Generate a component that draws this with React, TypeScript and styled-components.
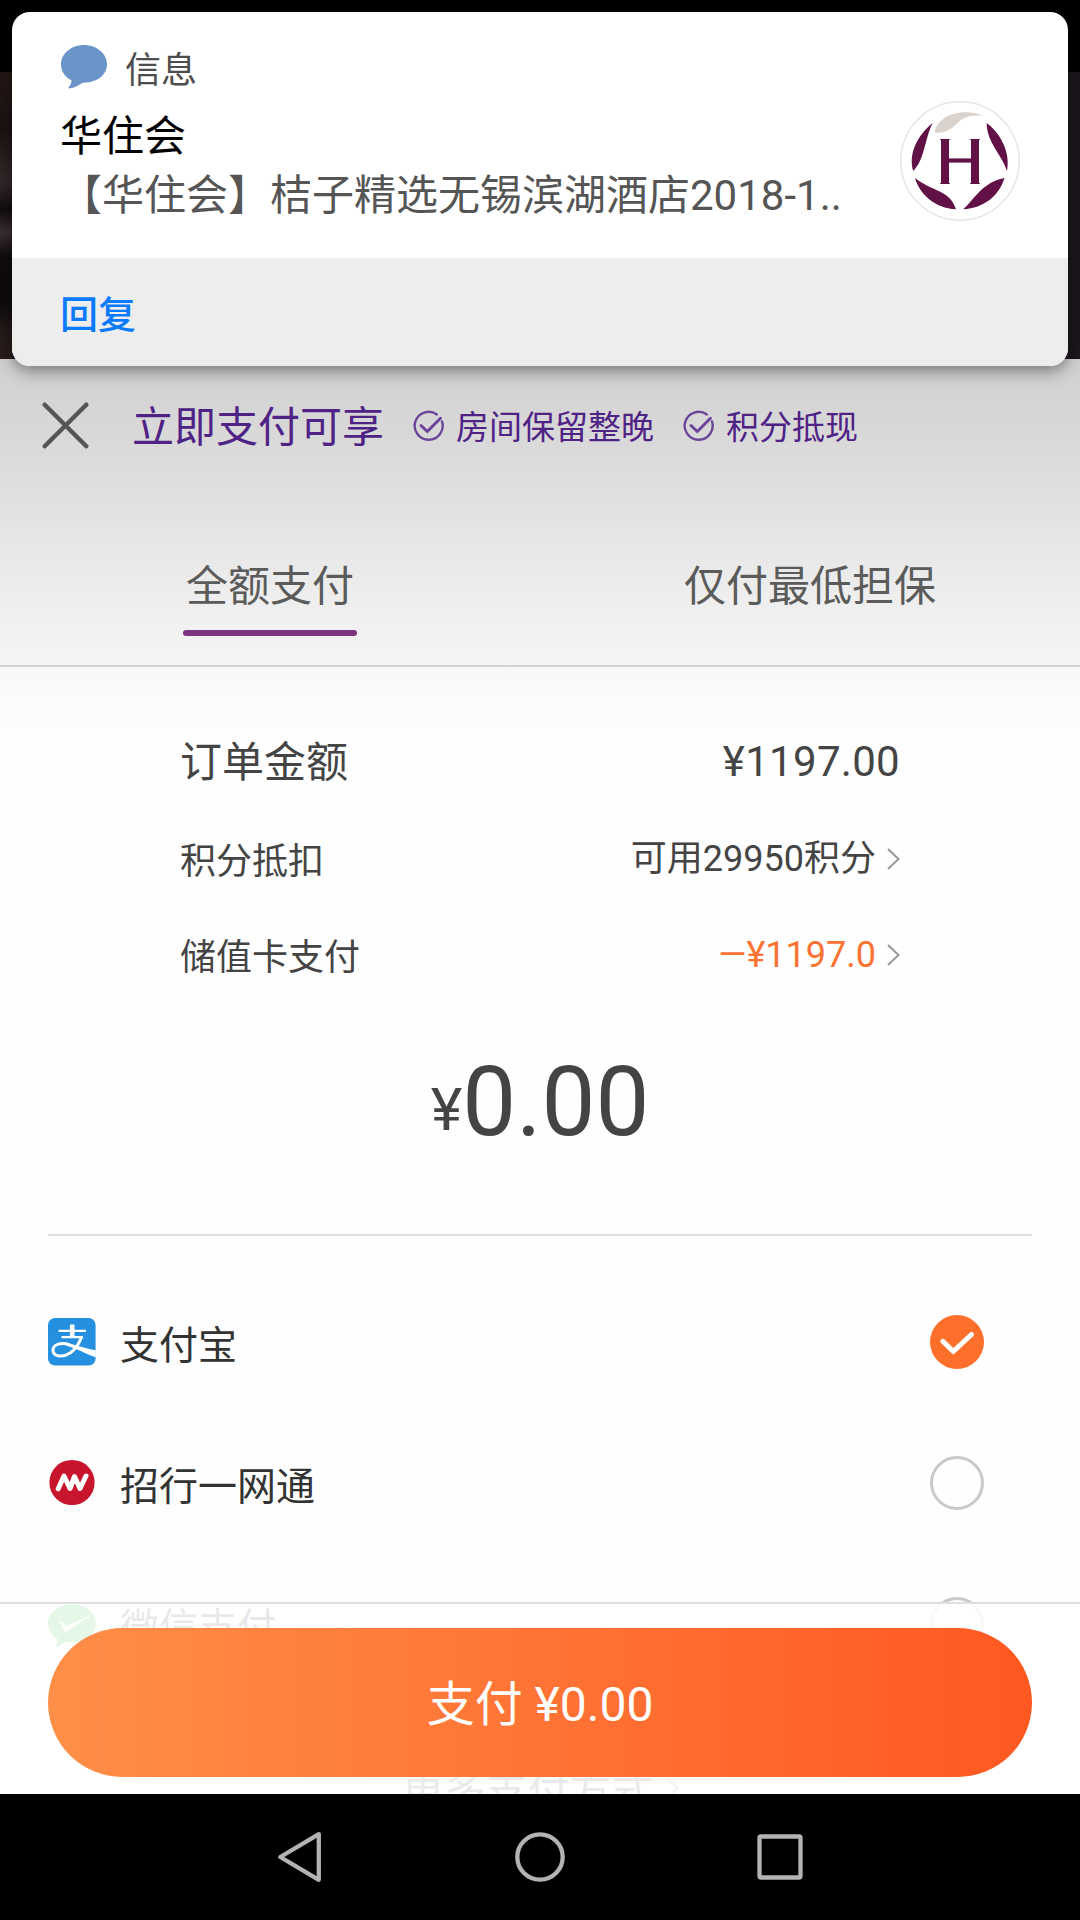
import React from 'react';
import styled, { createGlobalStyle } from 'styled-components';

const latin = `Roboto, 'Noto Sans CJK SC', sans-serif`;
const cjk = `'Noto Sans CJK SC', Roboto, sans-serif`;

const GlobalStyle = createGlobalStyle`
  * { box-sizing: border-box; }
  body { margin: 0; background: #000; font-family: ${latin}; }
`;

const Screen = styled.div`
  position: relative;
  width: 1080px;
  height: 1920px;
  overflow: hidden;
  display: flex;
  flex-direction: column;
  background: #000;
`;

const HotelPhoto = styled.div`
  flex: none;
  height: 287px;
  margin-top: 72px;
  background:
    linear-gradient(90deg, transparent 12px, #1b161c 12px),
    linear-gradient(180deg, #241816 0%, #1c1211 20%, #33282a 38%, #120d0d 48%, #3a2e31 56%, #0f0c0d 64%, #0e0a0b 80%, #241a19 90%, #2a1d1b 100%);
`;

const Sheet = styled.main`
  position: relative;
  flex: none;
  height: 1435px;
  overflow: hidden;
  background: linear-gradient(180deg, #d0d0d0 0, #d9d9d9 80px, #e4e4e4 165px, #eeeeee 240px, #f5f5f5 306px, #f8f8f8 308px, #fcfcfc 350px, #fefefe 390px, #fefefe 100%);
`;

const SheetHeader = styled.header`
  display: flex;
  align-items: center;
  height: 132px;
  padding-left: 42px;
  color: #4f2286;
  font-family: ${latin};
`;

const HeaderTitle = styled.h1`
  margin: 5px 0 0 43px;
  font-size: 42px;
  line-height: 48px;
  font-weight: 400;
`;

const Perk = styled.span<{ $gap: number }>`
  display: flex;
  align-items: center;
  gap: 12px;
  margin-left: ${(p) => p.$gap}px;
  font-size: 33px;
  line-height: 36px;
  span { padding-top: 5px; }
`;

const Tabs = styled.nav`
  display: grid;
  grid-template-columns: 1fr 1fr;
  height: 176px;
  border-bottom: 2px solid #d3d3d3;
`;

const Tab = styled.button<{ $active?: boolean }>`
  display: flex;
  flex-direction: column;
  align-items: center;
  gap: 26px;
  padding: 71px 0 0;
  border: 0;
  background: none;
  color: #5b5b5b;
  font: 400 42px/42px ${cjk};
  &::after {
    content: '';
    width: 174px;
    height: 6px;
    border-radius: 3px;
    background: ${(p) => (p.$active ? '#7c3580' : 'transparent')};
  }
`;

const Summary = styled.section`
  padding: 46px 180px 0;
  color: #444;
`;

const SummaryRow = styled.div<{ $height: number; $size: number; $tracking?: number }>`
  display: flex;
  align-items: center;
  justify-content: space-between;
  height: ${(p) => p.$height}px;
  font-size: ${(p) => p.$size}px;
  line-height: 48px;
`;

const RowLabel = styled.span<{ $drop?: number }>`
  padding-top: ${(p) => p.$drop ?? 0}px;
`;

const RowValue = styled.span<{ $accent?: boolean; $tracking?: number }>`
  display: flex;
  align-items: center;
  gap: 11px;
  letter-spacing: ${(p) => p.$tracking ?? 0}px;
  color: ${(p) => (p.$accent ? '#fb7232' : 'inherit')};
`;

const Total = styled.div`
  display: flex;
  justify-content: center;
  align-items: baseline;
  height: 231px;
  padding-top: 43px;
  font-size: 96px;
  line-height: 112px;
  color: #444;
`;

const Currency = styled.span`
  font-size: 60px;
  line-height: 60px;
  display: inline-block;
  transform: translateY(-5px);
`;

const Methods = styled.section`
  margin: 0 48px;
  padding-top: 35px;
  border-top: 2px solid #e0e0e0;
`;

const Method = styled.label`
  display: flex;
  align-items: center;
  height: 141px;
  padding-right: 48px;
  color: #333;
  font: 400 39px/44px ${cjk};
`;

const MethodIcon = styled.span`
  display: flex;
  width: 48px;
  height: 48px;
  margin-right: 24px;
`;

const MethodName = styled.span`
  flex: 1;
`;

const Radio = styled.span<{ $checked?: boolean }>`
  display: flex;
  width: 54px;
  height: 54px;
  border-radius: 50%;
  border: ${(p) => (p.$checked ? '0' : '3px solid #c9c9c9')};
  background: ${(p) => (p.$checked ? '#ff6f2c' : 'transparent')};
`;

const MoreMethods = styled.div`
  display: flex;
  align-items: center;
  justify-content: center;
  gap: 12px;
  height: 188px;
  color: #444;
  font: 400 42px/44px ${cjk};
`;

const PayBar = styled.footer`
  position: absolute;
  left: 0;
  right: 0;
  bottom: 0;
  height: 192px;
  padding: 24px 48px 0;
  border-top: 2px solid #dfdfdf;
  background: rgba(255, 255, 255, 0.89);
`;

const PayButton = styled.button`
  display: flex;
  align-items: center;
  justify-content: center;
  width: 984px;
  height: 149px;
  padding: 4px 0 0;
  border: 0;
  border-radius: 75px;
  background: linear-gradient(90deg, #ff8f48, #ff5820);
  color: #fff;
  font: 400 48px/56px ${latin};
`;

const NavBar = styled.nav`
  flex: none;
  display: flex;
  align-items: center;
  justify-content: center;
  gap: 180px;
  height: 126px;
  background: #000;
`;

const Notification = styled.aside`
  position: absolute;
  left: 12px;
  top: 12px;
  width: 1056px;
  height: 354px;
  border-radius: 18px;
  overflow: hidden;
  background: #fff;
  box-shadow: 0 5px 16px rgba(0, 0, 0, 0.42);
`;

const NoticeBody = styled.div`
  display: flex;
  justify-content: space-between;
  height: 246px;
  padding: 0 48px 0 48px;
`;

const NoticeText = styled.div`
  display: flex;
  flex-direction: column;
  padding-top: 31px;
`;

const NoticeAvatar = styled.div`
  flex: none;
  width: 120px;
  height: 120px;
  margin-top: 89px;
`;

const NoticeApp = styled.div`
  display: flex;
  align-items: center;
  gap: 18px;
  height: 48px;
  padding-left: 1px;
  color: #4d4d4d;
  font: 400 36px/48px ${cjk};
`;

const NoticeSender = styled.div`
  margin-top: 16px;
  color: #000;
  font: 400 42px/60px ${latin};
`;

const NoticeMessage = styled.div`
  width: 800px;
  color: #555;
  font: 400 42px/58px ${latin};
  white-space: nowrap;
`;

const NoticeAction = styled.button`
  display: flex;
  align-items: center;
  width: 100%;
  height: 108px;
  padding: 0 0 1px 48px;
  border: 0;
  background: #ededed;
  color: #0a7bff;
  font: 500 38px/48px ${cjk};
`;

const CloseIcon = () => (
  <svg width="47" height="47" viewBox="0 0 47 47" fill="none" stroke="#555" strokeWidth="4.4" strokeLinecap="round">
    <path d="M2.7 2.7 44.3 44.3M44.3 2.7 2.7 44.3" />
  </svg>
);

const PerkIcon = () => (
  <svg width="31" height="31" viewBox="0 0 31 31" fill="none" stroke="#6b459a" strokeWidth="2.4" strokeLinecap="round">
    <path d="M23.8 4.4A14 14 0 1 0 29 11.5" />
    <path d="M8 15.5 14.3 21.5 27.5 8.3" strokeWidth="3" />
  </svg>
);

const Chevron = () => (
  <svg width="13" height="22" viewBox="0 0 13 22" fill="none" stroke="#999" strokeWidth="2">
    <path d="M1 1 11.5 11 1 21" />
  </svg>
);

const BubbleIcon = () => (
  <svg width="46" height="44" viewBox="0 0 46 44" fill="#6b95c9">
    <path d="M23 0C10.300 0 0 8.500 0 19.500C0 26.500 4 32 10.500 35.300C10.500 38.500 9 41 7.400 42.400C7.500 43.200 8.500 43.600 9.500 43.300C14 42.800 18.500 39.500 22 37.700C35.500 38 46 30 46 19.500C46 8.500 35.700 0 23 0Z" />
  </svg>
);

const HotelLogo = () => (
  <svg width="120" height="120" viewBox="0 0 120 120" fill="#611146">
    <circle cx="60" cy="60" r="59.200" fill="#fff" stroke="#e8e3e5" strokeWidth="1.400" />
    <path fill="#dad2cc" d="M34.600 31.500C36 21 48 11.300 65 11.300C72 11.300 78 12.500 81.500 14.700C74 14 67 14.500 61 19C53 26 48 33 34.600 31.500Z" />
    <path d="M32.600 22C18 34 8 52 13.200 70C25 58 24 40 32.600 22Z" />
    <path d="M86.600 22C99 31 111 50 107 70C101 52 87 42 86.600 22Z" />
    <path d="M15 77C20 94 35 107 56 108.300C50 89 31 90 15 77Z" />
    <path d="M104.500 77C99 95 84 107 63.200 108.300C75 98 81 82 104.500 77Z" />
    <rect x="41" y="38" width="8" height="45" />
    <rect x="71" y="38" width="8" height="45" />
    <rect x="48" y="57.400" width="24" height="4.200" />
    <path d="M40.200 38h9.600v1h-9.600zM70.200 38h9.600v1h-9.600zM40.200 82h9.600v1h-9.600zM70.200 82h9.600v1h-9.600z" />
  </svg>
);

const AlipayIcon = () => (
  <svg width="48" height="48" viewBox="0 0 48 48" fill="none" stroke="#fff">
    <rect width="47.600" height="47.600" rx="7" fill="#258fe0" stroke="none" />
    <path d="M10.500 12.800H38M13.500 19.200H35" strokeWidth="2.200" />
    <path d="M24.200 6.500V19" strokeWidth="4.600" />
    <path d="M33.500 19C31 26 27.500 31 22.500 34.800C15 40 5 38.800 5 32.300C5 26 13.500 24 22 27" strokeWidth="3" />
    <path d="M18 24.700C28 26.500 36 30.500 47.800 32.200V39.300C38 36 29 30.500 18 27.500Z" fill="#fff" stroke="none" />
  </svg>
);

const CmbIcon = () => (
  <svg width="48" height="48" viewBox="0 0 48 48" fill="none">
    <circle cx="24" cy="23.500" r="22.600" fill="#c8152d" />
    <path d="M10.200 29.800 16 17 22 29.500 26.500 17.500 32 29.500 38 17" stroke="#fff" strokeWidth="5" strokeLinecap="round" strokeLinejoin="round" />
  </svg>
);

const WechatPayIcon = () => (
  <svg width="48" height="48" viewBox="0 0 48 48">
    <path fill="#19b529" d="M24 4.500C10.700 4.500 0 12.500 0 23.500C0 30 4 35.500 9.500 39L8 48L17.500 42C37 44.500 48 34.500 48 23.500C48 12.500 37.300 4.500 24 4.500Z" />
    <path fill="#fff" d="M11 20.500 19 25.500 45.500 14 17 32.500Z" />
  </svg>
);

const CheckMark = () => (
  <svg width="54" height="54" viewBox="0 0 54 54" fill="none" stroke="#fff" strokeWidth="5" strokeLinecap="round" strokeLinejoin="round">
    <path d="M12.800 26.300 23.300 36.500 41.500 19.500" />
  </svg>
);

const BackIcon = () => (
  <svg width="60" height="60" viewBox="0 0 60 60" fill="none" stroke="#b3b3b3" strokeWidth="4.300" strokeLinejoin="round">
    <path d="M10.300 30 48.800 7.200V52.800Z" />
  </svg>
);

const HomeIcon = () => (
  <svg width="60" height="60" viewBox="0 0 60 60" fill="none" stroke="#b3b3b3" strokeWidth="4.300">
    <circle cx="30" cy="30" r="22.700" />
  </svg>
);

const RecentIcon = () => (
  <svg width="60" height="60" viewBox="0 0 60 60" fill="none" stroke="#b3b3b3" strokeWidth="4.300">
    <rect x="9.500" y="9.500" width="41" height="41" rx="1.500" />
  </svg>
);

export default function App() {
  return (
    <Screen>
      <GlobalStyle />
      <HotelPhoto />
      <Sheet>
        <SheetHeader>
          <CloseIcon />
          <HeaderTitle>立即支付可享</HeaderTitle>
          <Perk $gap={29}><PerkIcon /><span>房间保留整晚</span></Perk>
          <Perk $gap={29}><PerkIcon /><span>积分抵现</span></Perk>
        </SheetHeader>
        <Tabs>
          <Tab $active>全额支付</Tab>
          <Tab>仅付最低担保</Tab>
        </Tabs>
        <Summary>
          <SummaryRow $height={98} $size={42}>
            <RowLabel $drop={1}>订单金额</RowLabel>
            <RowValue $tracking={0.3}>¥1197.00</RowValue>
          </SummaryRow>
          <SummaryRow $height={96} $size={36}>
            <RowLabel $drop={5}>积分抵扣</RowLabel>
            <RowValue>可用29950积分<Chevron /></RowValue>
          </SummaryRow>
          <SummaryRow $height={96} $size={36}>
            <RowLabel $drop={5}>储值卡支付</RowLabel>
            <RowValue $accent>—¥1197.0<Chevron /></RowValue>
          </SummaryRow>
        </Summary>
        <Total><Currency>¥</Currency>0.00</Total>
        <Methods>
          <Method>
            <MethodIcon><AlipayIcon /></MethodIcon>
            <MethodName>支付宝</MethodName>
            <Radio $checked><CheckMark /></Radio>
          </Method>
          <Method>
            <MethodIcon><CmbIcon /></MethodIcon>
            <MethodName>招行一网通</MethodName>
            <Radio />
          </Method>
          <Method>
            <MethodIcon><WechatPayIcon /></MethodIcon>
            <MethodName>微信支付</MethodName>
            <Radio />
          </Method>
          <MoreMethods>更多支付方式<Chevron /></MoreMethods>
        </Methods>
        <PayBar>
          <PayButton>支付 ¥0.00</PayButton>
        </PayBar>
      </Sheet>
      <NavBar>
        <BackIcon />
        <HomeIcon />
        <RecentIcon />
      </NavBar>
      <Notification>
        <NoticeBody>
          <NoticeText>
            <NoticeApp><BubbleIcon />信息</NoticeApp>
            <NoticeSender>华住会</NoticeSender>
            <NoticeMessage>【华住会】桔子精选无锡滨湖酒店2018-1..</NoticeMessage>
          </NoticeText>
          <NoticeAvatar><HotelLogo /></NoticeAvatar>
        </NoticeBody>
        <NoticeAction>回复</NoticeAction>
      </Notification>
    </Screen>
  );
}
